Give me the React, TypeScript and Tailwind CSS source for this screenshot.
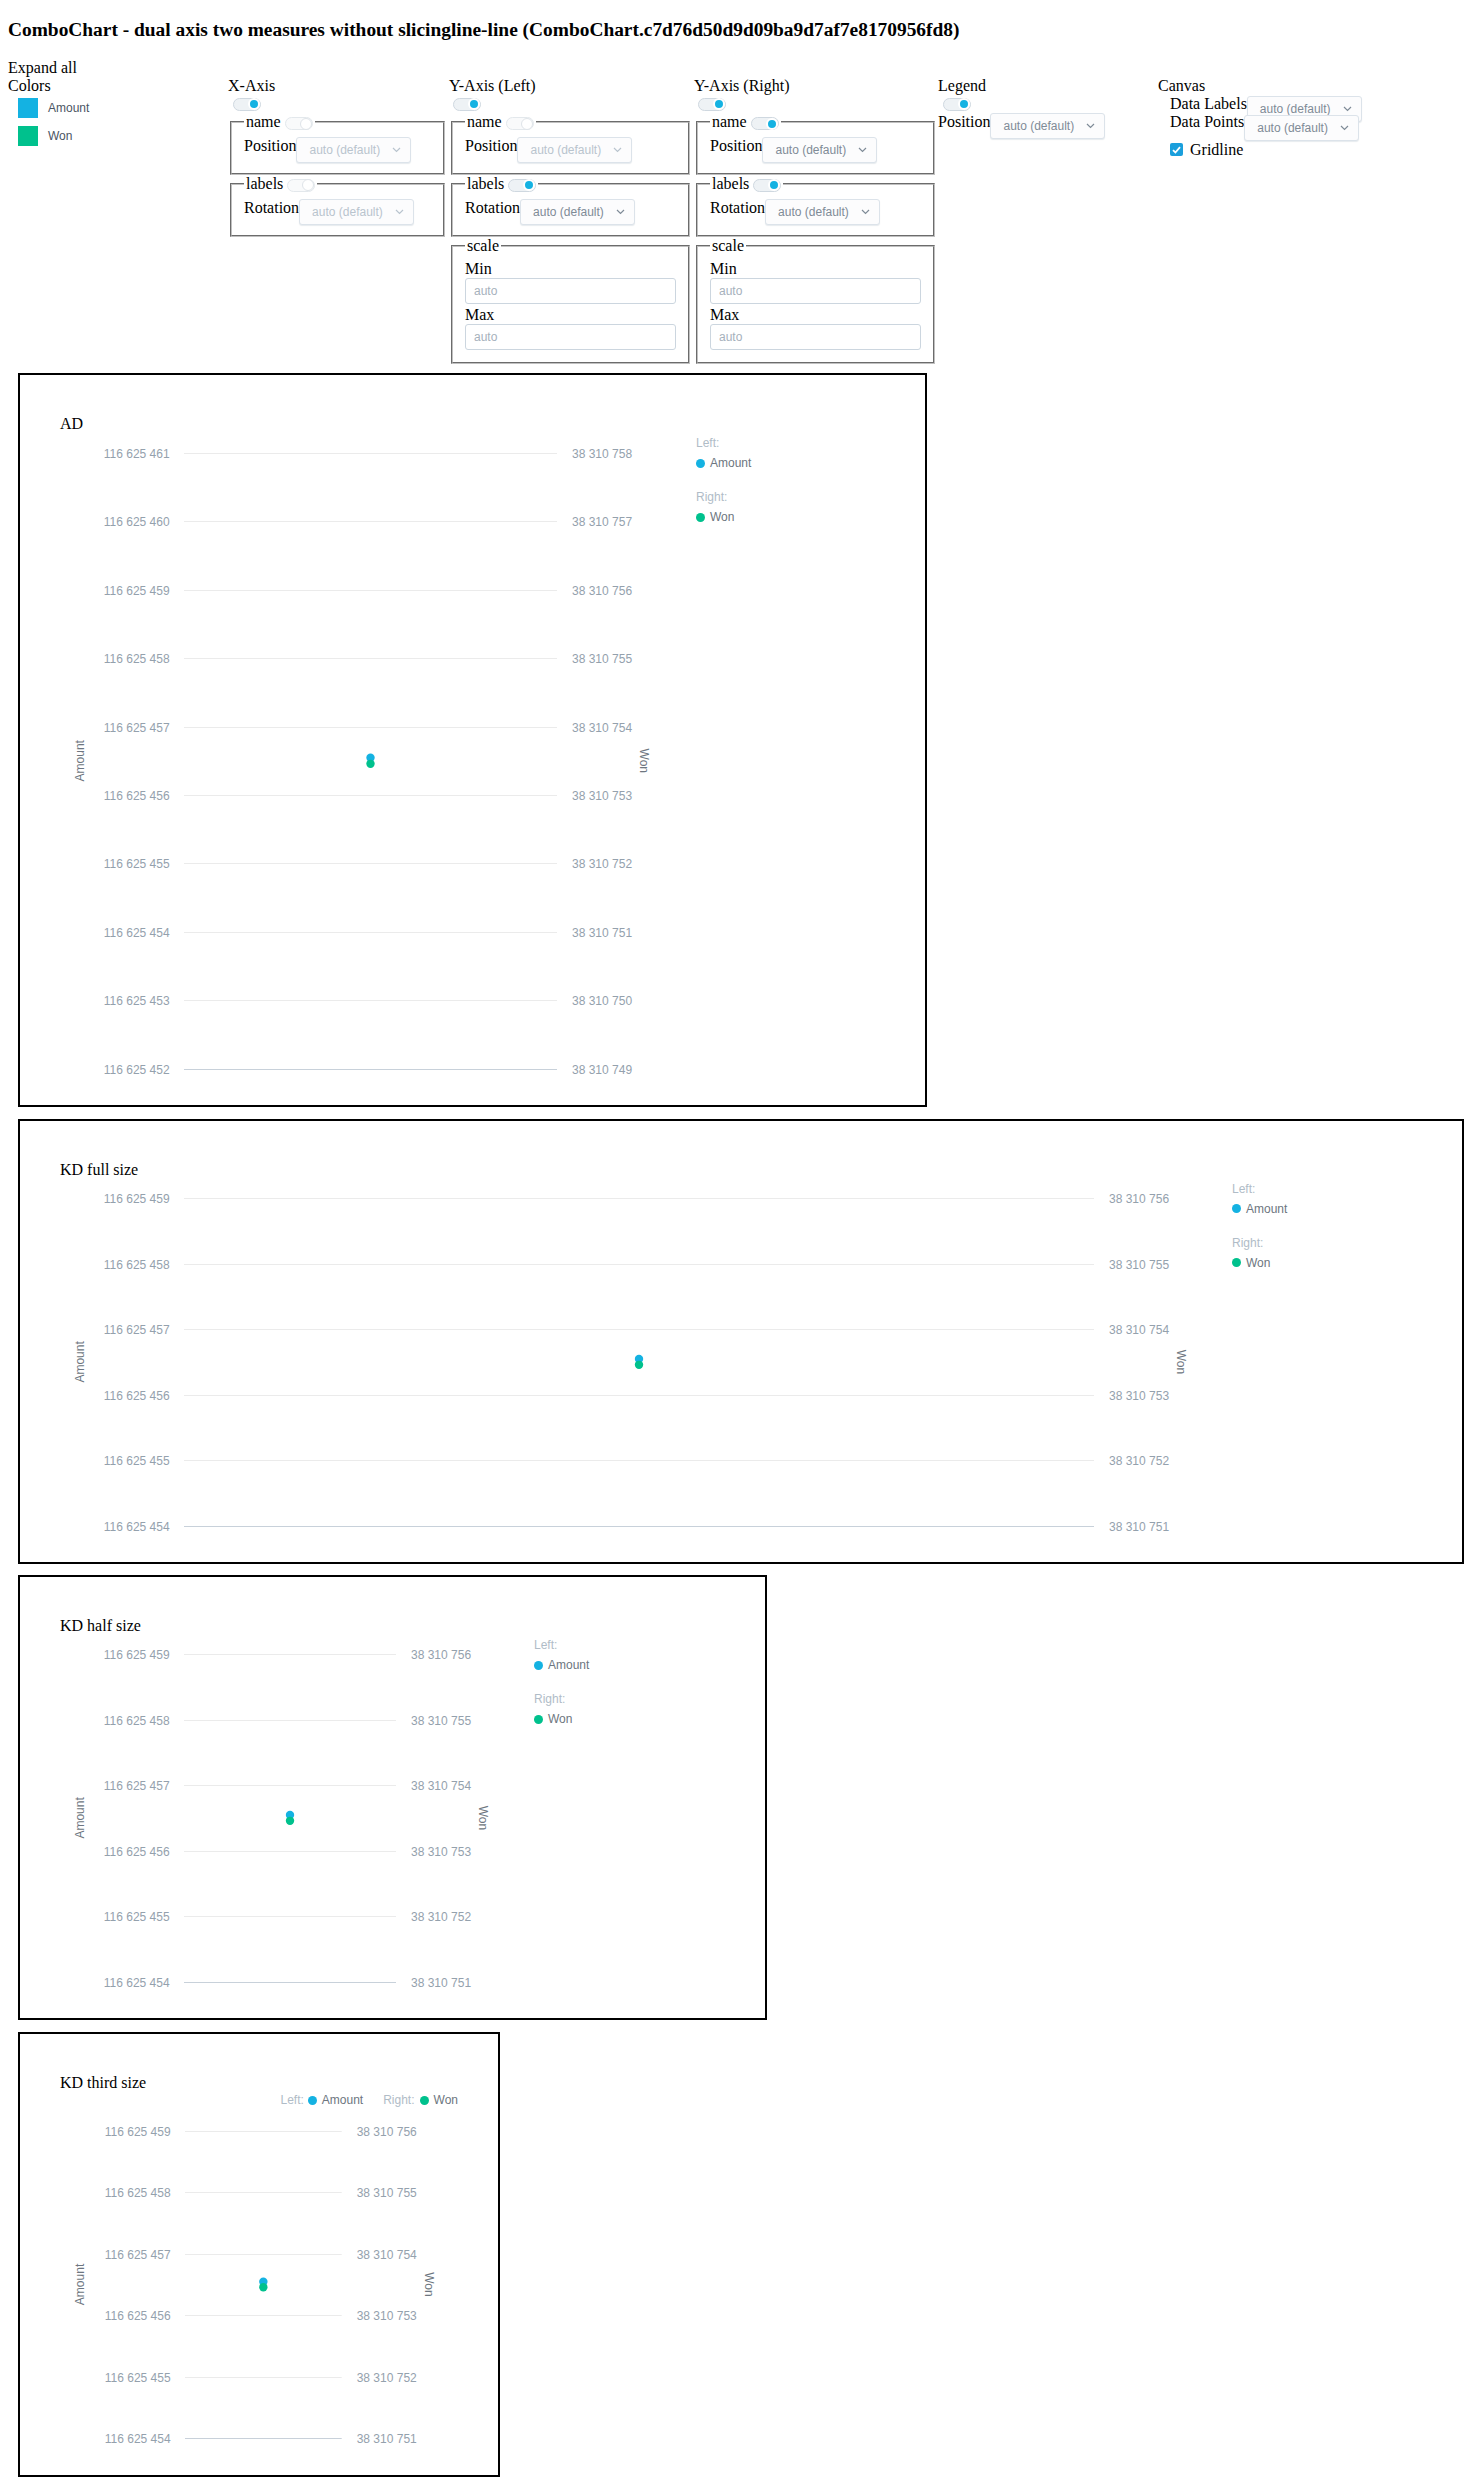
import React from "react";

const AMOUNT = "#14b2e2";
const WON = "#00c18d";
const TICK = "#94a1ad";
const SANS_FAMILY = "'Liberation Sans', Arial, sans-serif";

function Chevron({ color }: { color: string }) {
  return (
    <svg width="9" height="6" viewBox="0 0 9 6" fill="none">
      <path d="M1 1l3.5 3.5L8 1" stroke={color} strokeWidth="1.2" />
    </svg>
  );
}

function Select({ dim = false }: { dim?: boolean }) {
  return (
    <div
      className={`flex h-[26px] w-[115px] shrink-0 items-center justify-between rounded-[3px] border border-[#dce3ea] bg-[#fcfcfd] pl-3 pr-[9px] font-['Liberation_Sans',Arial,sans-serif] text-[12px] shadow-[0_1px_1px_rgba(20,56,93,0.1)] ${
        dim ? "text-[#b9c4ce]" : "text-[#7f8b97]"
      }`}
    >
      <span>auto (default)</span>
      <Chevron color={dim ? "#b9c4ce" : "#7f8b97"} />
    </div>
  );
}

function Toggle({ on = true, className = "" }: { on?: boolean; className?: string }) {
  return (
    <span
      className={`inline-flex h-[13px] w-[28px] items-center justify-end rounded-full border align-middle ${
        on ? "border-[#cfd8e0] bg-[#eef2f5]" : "border-[#e3e8ec] bg-[#f9fafb]"
      } ${className}`}
    >
      <span
        className={`h-[12px] w-[12px] rounded-full ${
          on ? "border-2 border-white bg-[#14b2e2]" : "border border-[#dfe4e9] bg-white"
        }`}
      />
    </span>
  );
}

function Group({
  legend,
  toggle,
  className = "",
  children,
}: {
  legend: string;
  toggle?: boolean;
  className?: string;
  children: React.ReactNode;
}) {
  return (
    <fieldset
      className={`mx-[2px] border-2 border-[#c0c0c0] px-3 pt-[5.6px] pb-[10px] [border-style:groove] ${className}`}
    >
      <legend className="px-[2px]">
        {legend}
        {toggle !== undefined && <Toggle on={toggle} className="ml-1" />}
      </legend>
      {children}
    </fieldset>
  );
}

function Row({ label, dim }: { label: string; dim?: boolean }) {
  return (
    <div className="flex items-start">
      <span>{label}</span>
      <Select dim={dim} />
    </div>
  );
}

function Field({ label }: { label: string }) {
  return (
    <>
      <div>{label}</div>
      <input
        placeholder="auto"
        className="mb-[2px] block h-[26px] w-full rounded-[3px] border border-[#ccd6df] bg-white pl-2 font-['Liberation_Sans',Arial,sans-serif] text-[12px] placeholder:text-[#a6b1bc]"
      />
    </>
  );
}

function Dot({ color }: { color: string }) {
  return <span className="inline-block h-[9px] w-[9px] shrink-0 rounded-full" style={{ background: color }} />;
}

type ChartCfg = {
  title: string;
  box: string;
  svgW: number;
  svgH: number;
  gx1: number;
  gx2: number;
  gy1: number;
  gy2: number;
  left: string[];
  right: string[];
  amount: number;
  won: number;
  legend: "side" | "top";
};

function Chart(c: ChartCfg) {
  const cx = (c.gx1 + c.gx2) / 2;
  const step = (c.gy2 - c.gy1) / (c.left.length - 1);
  const midY = (c.gy1 + c.gy2) / 2;
  const wonX = c.gx2 + 87;
  return (
    <div className={`shrink-0 border-2 border-black ${c.box}`}>
      <div className="pl-10 pt-10">{c.title}</div>
      {c.legend === "top" && (
        <div className="flex h-[17px] items-center justify-end pr-10 font-['Liberation_Sans',Arial,sans-serif] text-[12px]">
          <span className="text-[#b0bcc7]">Left:</span>
          <span className="ml-1 flex items-center gap-[5px] text-[#6d7680]">
            <Dot color={AMOUNT} />
            Amount
          </span>
          <span className="ml-5 text-[#b0bcc7]">Right:</span>
          <span className="ml-[5px] flex items-center gap-[5px] text-[#6d7680]">
            <Dot color={WON} />
            Won
          </span>
        </div>
      )}
      <div className="flex items-start">
        <svg width={c.svgW} height={c.svgH} className="block shrink-0" fontFamily={SANS_FAMILY} fontSize="12">
          {c.left.map((l, i) => {
            const y = Math.round(c.gy1 + i * step) + 0.5;
            const last = i === c.left.length - 1;
            return (
              <g key={l}>
                <line x1={c.gx1} x2={c.gx2} y1={y} y2={y} stroke={last ? "#c8d1da" : "#ebebeb"} strokeWidth="1" />
                <text x={c.gx1 - 14.4} y={y} textAnchor="end" dominantBaseline="central" fill={TICK}>
                  {l}
                </text>
                <text x={c.gx2 + 15} y={y} dominantBaseline="central" fill={TICK}>
                  {c.right[i]}
                </text>
              </g>
            );
          })}
          <text
            x={60}
            y={midY}
            textAnchor="middle"
            dominantBaseline="central"
            fill="#6d7680"
            transform={`rotate(-90 60 ${midY})`}
          >
            Amount
          </text>
          <text
            x={wonX}
            y={midY}
            textAnchor="middle"
            dominantBaseline="central"
            fill="#6d7680"
            transform={`rotate(90 ${wonX} ${midY})`}
          >
            Won
          </text>
          <circle cx={cx} cy={c.gy1 + c.amount * (c.gy2 - c.gy1)} r="4.2" fill={AMOUNT} />
          <circle cx={cx} cy={c.gy1 + c.won * (c.gy2 - c.gy1)} r="4.2" fill={WON} />
        </svg>
        {c.legend === "side" && (
          <div className="font-['Liberation_Sans',Arial,sans-serif] text-[12px] leading-5">
            <div className="text-[#b0bcc7]">Left:</div>
            <div className="flex items-center gap-[5px] text-[#6d7680]">
              <Dot color={AMOUNT} />
              Amount
            </div>
            <div className="mt-[14px] text-[#b0bcc7]">Right:</div>
            <div className="flex items-center gap-[5px] text-[#6d7680]">
              <Dot color={WON} />
              Won
            </div>
          </div>
        )}
      </div>
    </div>
  );
}

const LEFT10 = ["461", "460", "459", "458", "457", "456", "455", "454", "453", "452"].map((v) => `116 625 ${v}`);
const RIGHT10 = ["758", "757", "756", "755", "754", "753", "752", "751", "750", "749"].map((v) => `38 310 ${v}`);
const LEFT6 = ["459", "458", "457", "456", "455", "454"].map((v) => `116 625 ${v}`);
const RIGHT6 = ["756", "755", "754", "753", "752", "751"].map((v) => `38 310 ${v}`);

export default function App() {
  return (
    <div className="min-h-screen bg-white px-2 pt-[18.72px] pb-[10px] font-['Liberation_Serif','Times_New_Roman',serif] text-[16px] leading-[normal] text-black">
      <h3 className="mb-[18.72px] text-[19.4px] leading-[21.5px] font-bold">
        ComboChart - dual axis two measures without slicingline-line
        (ComboChart.c7d76d50d9d09ba9d7af7e8170956fd8)
      </h3>
      <div>Expand all</div>

      <div className="flex items-start">
        <div className="w-[220px] shrink-0">
          <div>Colors</div>
          <div className="mt-[3px] flex flex-col gap-2 pl-[10px]">
            {[
              ["Amount", AMOUNT],
              ["Won", WON],
            ].map(([name, color]) => (
              <div key={name} className="flex items-center gap-[10px]">
                <span className="h-5 w-5" style={{ background: color }} />
                <span className="font-['Liberation_Sans',Arial,sans-serif] text-[12px] text-[#4b5563]">{name}</span>
              </div>
            ))}
          </div>
        </div>

        <div className="w-[221px] shrink-0">
          <div>X-Axis</div>
          <div className="flex h-[18.4px] items-center">
            <Toggle className="ml-[5px]" />
          </div>
          <Group legend="name" toggle={false} className="w-[215px]">
            <Row label="Position" dim />
          </Group>
          <Group legend="labels" toggle={false} className="w-[215px]">
            <Row label="Rotation" dim />
          </Group>
        </div>

        <div className="w-[245px] shrink-0">
          <div>Y-Axis (Left)</div>
          <div className="flex h-[18.4px] items-center">
            <Toggle className="ml-1" />
          </div>
          <Group legend="name" toggle={false} className="w-[239px]">
            <Row label="Position" dim />
          </Group>
          <Group legend="labels" toggle className="w-[239px]">
            <Row label="Rotation" />
          </Group>
          <Group legend="scale" className="w-[239px]">
            <Field label="Min" />
            <Field label="Max" />
          </Group>
        </div>

        <div className="w-[244px] shrink-0">
          <div>Y-Axis (Right)</div>
          <div className="flex h-[18.4px] items-center">
            <Toggle className="ml-1" />
          </div>
          <Group legend="name" toggle className="w-[239px]">
            <Row label="Position" />
          </Group>
          <Group legend="labels" toggle className="w-[239px]">
            <Row label="Rotation" />
          </Group>
          <Group legend="scale" className="w-[239px]">
            <Field label="Min" />
            <Field label="Max" />
          </Group>
        </div>

        <div className="w-[220px] shrink-0">
          <div>Legend</div>
          <div className="flex h-[18.4px] items-center">
            <Toggle className="ml-[5px]" />
          </div>
          <Row label="Position" />
        </div>

        <div className="shrink-0">
          <div>Canvas</div>
          <div className="pl-3">
            <div className="flex h-[18.4px] items-start">
              <span>Data Labels</span>
              <div className="mt-[1px]">
                <Select />
              </div>
            </div>
            <div className="flex h-[18.4px] items-start">
              <span>Data Points</span>
              <div className="mt-[2px]">
                <Select />
              </div>
            </div>
            <div className="mt-[9px] flex h-[18.4px] items-center gap-[7px]">
              <span className="flex h-[13px] w-[13px] items-center justify-center rounded-[2px] bg-[#1a9fdc]">
                <svg width="9" height="8" viewBox="0 0 9 8" fill="none">
                  <path d="M1 4.2l2.4 2.3L8 1.2" stroke="white" strokeWidth="1.8" />
                </svg>
              </span>
              <span>Gridline</span>
            </div>
          </div>
        </div>
      </div>

      <div className="ml-[10px] mt-[9px] flex flex-col items-start gap-[11.5px]">
        <Chart
          title="AD"
          box="w-[909px] h-[734px]"
          svgW={676}
          svgH={671}
          gx1={164}
          gx2={537}
          gy1={19.9}
          gy2={635.6}
          left={LEFT10}
          right={RIGHT10}
          amount={0.495}
          won={0.505}
          legend="side"
        />
        <Chart
          title="KD full size"
          box="w-[1446px] h-[445px]"
          svgW={1212}
          svgH={382}
          gx1={164}
          gx2={1074}
          gy1={19.3}
          gy2={346.5}
          left={LEFT6}
          right={RIGHT6}
          amount={0.491}
          won={0.509}
          legend="side"
        />
        <Chart
          title="KD half size"
          box="w-[749px] h-[445px]"
          svgW={514}
          svgH={382}
          gx1={164}
          gx2={376}
          gy1={19.3}
          gy2={346.5}
          left={LEFT6}
          right={RIGHT6}
          amount={0.491}
          won={0.509}
          legend="side"
        />
        <Chart
          title="KD third size"
          box="w-[482px] h-[445px]"
          svgW={478}
          svgH={365}
          gx1={165}
          gx2={321.7}
          gy1={21.6}
          gy2={329.3}
          left={LEFT6}
          right={RIGHT6}
          amount={0.491}
          won={0.509}
          legend="top"
        />
      </div>
    </div>
  );
}
